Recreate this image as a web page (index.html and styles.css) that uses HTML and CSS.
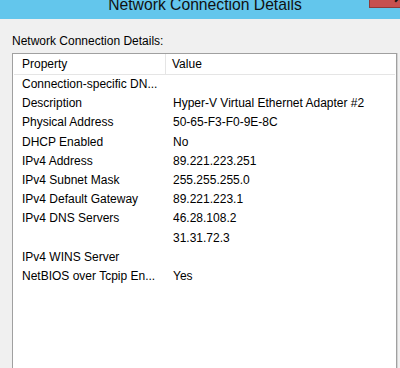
FILE: index.html
```html
<!DOCTYPE html>
<html lang="en">
<head>
    <meta charset="UTF-8">
    <title>Network Connection Details</title>
    <link rel="stylesheet" href="styles.css">
</head>
<body>
    <div class="titlebar">
        <span class="title">Network Connection Details</span>
        <div class="close-btn"><span>✕</span></div>
    </div>

    <div class="content">
        <div class="caption">Network Connection Details:</div>

        <div class="listview">
            <div class="list-header">
                <div class="col-head">Property</div>
                <div class="col-head">Value</div>
            </div>
            <div class="list-body">
                <div class="row"><span>Connection-specific DN...</span><span></span></div>
                <div class="row"><span>Description</span><span>Hyper-V Virtual Ethernet Adapter #2</span></div>
                <div class="row"><span>Physical Address</span><span>50-65-F3-F0-9E-8C</span></div>
                <div class="row"><span>DHCP Enabled</span><span>No</span></div>
                <div class="row"><span>IPv4 Address</span><span>89.221.223.251</span></div>
                <div class="row"><span>IPv4 Subnet Mask</span><span>255.255.255.0</span></div>
                <div class="row"><span>IPv4 Default Gateway</span><span>89.221.223.1</span></div>
                <div class="row"><span>IPv4 DNS Servers</span><span>46.28.108.2</span></div>
                <div class="row"><span></span><span>31.31.72.3</span></div>
                <div class="row"><span>IPv4 WINS Server</span><span></span></div>
                <div class="row"><span>NetBIOS over Tcpip En...</span><span>Yes</span></div>
            </div>
        </div>
    </div>
</body>
</html>
```

FILE: styles.css
```css
* {
    margin: 0;
    padding: 0;
    box-sizing: border-box;
}

body {
    width: 100vw;
    height: 100vh;
    overflow: hidden;
    background: #f0f0f0;
    font-family: 'Liberation Sans', Arial, sans-serif;
    font-size: 12px;
    color: #000;
    display: flex;
    flex-direction: column;
}

.titlebar {
    position: relative;
    height: 19px;
    flex: none;
    background: #63c6ec;
    overflow: hidden;
    text-align: center;
}

.title {
    display: block;
    margin-top: -5px;
    padding-left: 10px;
    font-size: 15.7px;
    line-height: 20px;
    color: #111;
}

.close-btn {
    position: absolute;
    top: -1px;
    left: 369px;
    width: 46px;
    height: 9px;
    background: #c75050;
    border: 1px solid #8f3a3a;
    overflow: hidden;
}

.close-btn span {
    display: block;
    margin-top: -9px;
    padding-left: 13px;
    font-size: 14px;
    font-weight: bold;
    line-height: 14px;
    color: #111;
}

.content {
    flex: 1;
    display: flex;
    flex-direction: column;
    padding: 15px 3px 0 12px;
}

.caption {
    line-height: 14px;
    margin-bottom: 5px;
}

.listview {
    flex: 1;
    background: #fff;
    border: 1px solid #a0a0a0;
    box-shadow: 1px 0 0 #d4d4d4;
    border-bottom: none;
    padding: 0 1px;
}

.list-header {
    display: grid;
    grid-template-columns: 152px 1fr;
    height: 21px;
    border-bottom: 1px solid #e5e5e5;
}

.col-head {
    padding-left: 8px;
    line-height: 21px;
    border-right: 1px solid #e5e5e5;
}

.col-head + .col-head {
    padding-left: 6px;
    border-right: none;
}

.row {
    display: grid;
    grid-template-columns: 152px 1fr;
    height: 19.2px;
    line-height: 19px;
}

.row span {
    padding-left: 8px;
    white-space: nowrap;
}

.row span + span {
    padding-left: 7px;
}
```
